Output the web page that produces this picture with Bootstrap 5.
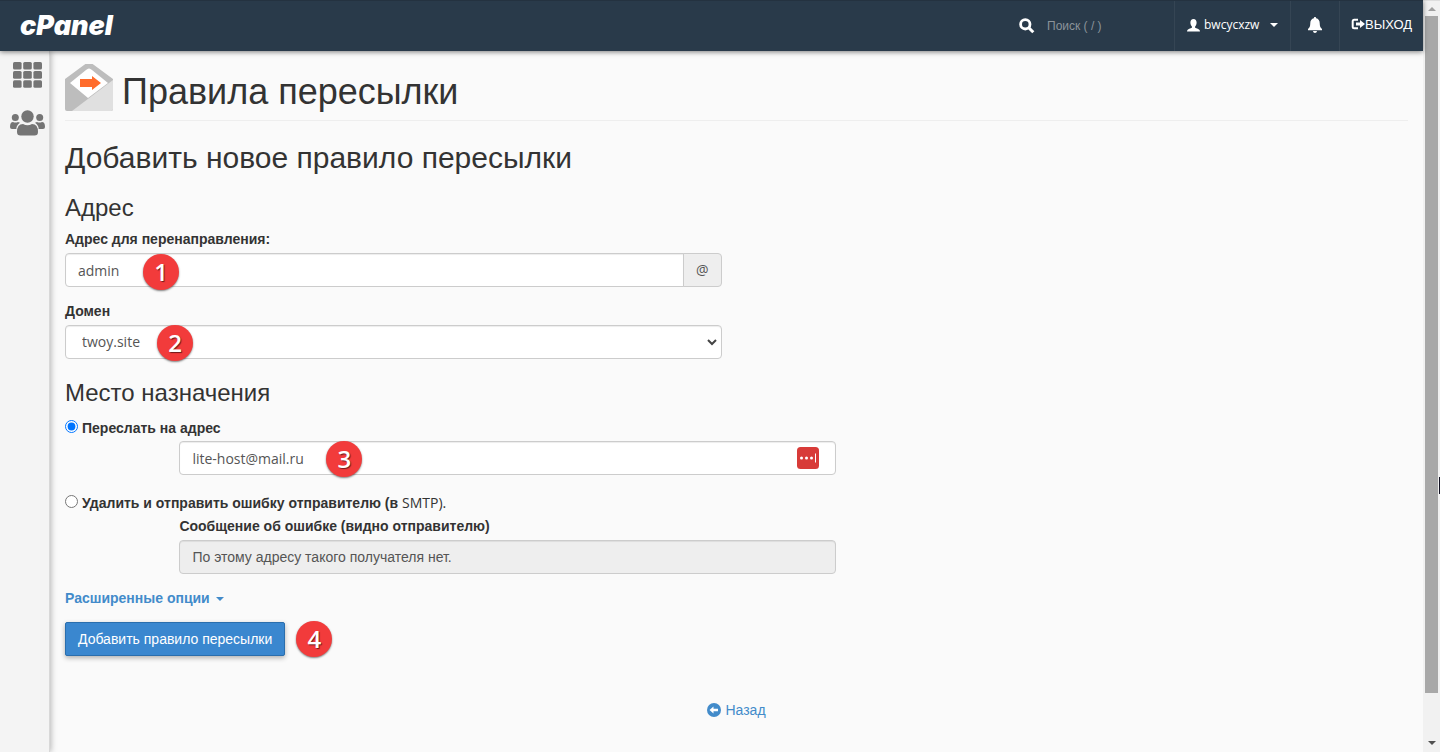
<!DOCTYPE html>
<html lang="ru">
<head>
<meta charset="utf-8">
<meta name="viewport" content="width=device-width, initial-scale=1">
<title>cPanel - Правила пересылки</title>
<link href="https://cdn.jsdelivr.net/npm/bootstrap@5.3.0/dist/css/bootstrap.min.css" rel="stylesheet">
<style>
  body { font: 14px/20px "Liberation Sans", Arial, sans-serif; color: #333; background: #fafafa; }
  .latin { font-family: "Open Sans", "Liberation Sans", sans-serif; }
  a { color: #428bca; text-decoration: none; }

  .topbar { height: 51px; background: #293a4a; border-top: 1px solid #243240; box-shadow: 0 1px 5px rgba(0,0,0,.5); z-index: 3; font-size: 12px; }
  .brand { color: #fff; font: italic 900 27px/50px Inter, "Open Sans", sans-serif; }
  .brand:hover { color: #fff; }
  .search-box { width: 111px; background: transparent; border: 0; color: #fff; font-size: 12px; outline: 0; }
  .search-box::placeholder { color: #8b939a; opacity: 1; }
  .top-item { border: 0; border-left: 1px solid #354554; background: transparent; color: #fff; font-size: 12px; padding-bottom: 3px; }
  .user-item { width: 116px; }
  .bell-item { width: 49px; padding-bottom: 5px; }
  .exit-item { width: 84px; font-size: 13px; }
  .exit-item:hover { color: #fff; }

  .sidebar { width: 50px; background: #f4f4f4; border-right: 1px solid #d8d8d8; box-shadow: 1px 0 6px rgba(0,0,0,.28); z-index: 2; padding: 11px 0 0 5px; gap: 22px; }

  main { padding: 12px 15px 32px; }
  .page-head { border-bottom: 1px solid #eee; padding-bottom: 8px; gap: 9px; }
  h1 { font-size: 36px; line-height: 40px; font-weight: 400; margin: 9px 0 0; }
  h2 { font-size: 30px; line-height: 33px; font-weight: 400; margin: 20px 0 0; }
  h3 { font-size: 24px; line-height: 26px; font-weight: 400; margin: 21px 0 8px; }
  .row { --bs-gutter-x: 30px; }
  .field-label { display: block; font-weight: 700; margin-bottom: 4px; }
  .form-control, .form-select, .input-group-text { height: 34px; font-size: 14px; line-height: 20px; padding: 6px 12px; border: 1px solid #ccc; border-radius: 4px; color: #555; }
  .form-control, .form-select { box-shadow: inset 0 1px 1px rgba(0,0,0,.075); }
  .form-control:disabled { background: #eee; }
  .form-select { padding-left: 16px; background-size: 10px 10px; background-position: right 4px center;
    background-image: url("data:image/svg+xml,%3csvg xmlns='http://www.w3.org/2000/svg' viewBox='0 0 10 10'%3e%3cpath fill='none' stroke='%23444' stroke-width='2' d='m1 3 4 4 4-4'/%3e%3c/svg%3e"); }
  .input-group-text { background: #eee; }
  .gap-field { margin-top: 14px; }
  .choice { min-height: 27px; gap: 4px; font-weight: 700; }
  .choice input { width: 13px; height: 13px; margin: 0 0 3px; }
  .step { width: 36px; height: 36px; border-radius: 50%; background: #f23b3b; color: #fff; font: 600 24px/36px "Open Sans", sans-serif; text-align: center; text-shadow: 1px 1px 1px rgba(0,0,0,.55); box-shadow: 0 1px 2px rgba(0,0,0,.5); z-index: 5; }
  .step-1 { left: 78px; top: 1px; }
  .step-2 { left: 92px; top: 0; }
  .step-3 { left: 147px; top: 0; }
  .vault { right: 17px; top: 6px; z-index: 5; line-height: 0; }
  .caret { display: inline-block; border: 4px solid transparent; border-top-color: currentColor; border-bottom: 0; vertical-align: middle; margin-left: 2px; }
  .submit-row { margin-top: 13px; gap: 11px; }
  .btn-add { height: 34px; padding: 6px 12px; font-size: 14px; line-height: 20px; color: #fff; background: #3a87cf; border: 1px solid #2a6ead; border-radius: 2px; box-shadow: 0 2px 5px rgba(0,0,0,.3); }
  .back { margin-top: 43px; }

  .scroll-rail { width: 17px; background: #f1f1f1; border-top: 1px solid #ddd; gap: 5px; }
  .scroll-thumb { width: 13px; background: #a8a8a8; margin-bottom: 43px; }
  .arrow-up { border: 4px solid transparent; border-bottom-color: #a0a0a0; border-top: 0; margin-top: 6px; }
  .arrow-down { border: 4px solid transparent; border-top-color: #505050; border-bottom: 0; margin-bottom: 7px; }
  .pointer { width: 1px; height: 17px; background: #112; right: 0; top: 476px; }
</style>
</head>
<body>
<div class="d-flex min-vh-100">
  <div class="d-flex flex-column flex-grow-1">
    <header class="topbar d-flex align-items-stretch position-relative">
      <a class="brand ms-3 ps-1 me-auto" href="#">cPanel</a>
      <form class="d-flex align-items-center" role="search">
        <label for="q" class="d-flex me-2 pe-1"><svg width="16" height="16" viewBox="0 0 16 16" fill="none" stroke="#fff"><circle cx="6.300" cy="6.300" r="4.700" stroke-width="2.800"/><path d="m10 10 4.300 4.300" stroke-width="3"/></svg></label>
        <input id="q" type="text" class="search-box p-0 me-3" placeholder="Поиск ( / )">
      </form>
      <button type="button" class="top-item user-item d-flex align-items-center px-2">
        <svg class="ms-1" width="13" height="13" viewBox="0 0 13 13" fill="#fff"><path d="M6.500 0C4.500 0 3.400 1.500 3.400 3.600c0 1.600.6 3 1.500 3.900v1.300C3.500 9.500.8 10.200.3 11.200L0 12.500h13l-.3-1.300c-.5-1-3.200-1.700-4.600-2.400V7.500c.9-.9 1.500-2.300 1.500-3.900C9.600 1.500 8.500 0 6.500 0z"/></svg>
        <span class="latin ms-1">bwcycxzw</span>
        <span class="caret ms-auto me-1"></span>
      </button>
      <button type="button" class="top-item bell-item px-0" aria-label="Уведомления">
        <svg width="16" height="16" viewBox="0 0 16 16" fill="#fff"><path d="M8 0c.7 0 1.100.5 1.100 1.200 2.300.5 3.600 2.400 3.600 4.800 0 3.600.9 4.900 2.300 6v1.300H1V12c1.400-1.100 2.300-2.400 2.300-6 0-2.400 1.300-4.300 3.600-4.800C6.900.5 7.300 0 8 0zM6 14h4c-.2 1.200-.9 1.900-2 1.900S6.200 15.200 6 14z"/></svg>
      </button>
      <a href="#" class="top-item exit-item d-flex align-items-center justify-content-center">
        <svg width="14" height="13" viewBox="0 0 14 13"><path d="M7 1.800H3.200q-1.500 0-1.500 1.500v5.400q0 1.500 1.500 1.500H7" fill="none" stroke="#fff" stroke-width="2"/><path d="M5 4.500h4V2l5 4-5 4V7.500H5z" fill="#fff"/></svg>
        <span>ВЫХОД</span>
      </a>
    </header>
    <div class="d-flex flex-grow-1">
      <nav class="sidebar d-flex flex-column align-items-center flex-shrink-0">
        <a href="#" aria-label="Все инструменты" class="d-flex"><svg width="29" height="26" viewBox="0 0 29 26" fill="#757575"><g id="r"><rect width="8.600" height="7.600" rx="1.500"/><rect x="10.200" width="8.600" height="7.600" rx="1.500"/><rect x="20.400" width="8.600" height="7.600" rx="1.500"/></g><use href="#r" y="9.100"/><use href="#r" y="18.200"/></svg></a>
        <a href="#" aria-label="Пользователи" class="d-flex"><svg width="35" height="26" viewBox="0 0 35 26" fill="#757575"><circle cx="17.500" cy="6.500" r="6.200"/><circle cx="5.300" cy="7.500" r="3.500"/><circle cx="29.700" cy="7.500" r="3.500"/><path d="M7 22q0-8 6-8 4.500 2.500 9 0 6 0 6 8 0 3.500-3.500 3.500h-14Q7 25.500 7 22zM3 12q2.500 1 5 0l2 .8Q6.500 15 6.300 19H2Q0 19 0 17q0-5 3-5zM32 12q-2.500 1-5 0l-2 .8q3.500 2.200 3.700 6.200H33q2 0 2-2 0-5-3-5z"/></svg></a>
      </nav>
      <main class="flex-grow-1">
        <div class="page-head d-flex align-items-center">
          <svg width="48" height="48" viewBox="0 0 48 48"><path d="M0 18v-3L19 1q5-4 10 0l19 14v30q0 2-2 2H2q-2 0-2-2z" fill="#bdbdbd"/><path d="M5 19 21 6q3-3 6 0l16 13-20 15z" fill="#fff"/><path d="M48 16v29q0 2-2 2H7z" fill="#e0e0e0"/><path d="M15 15h12v-3l9 7-9 7v-3H15z" fill="#ff6c2c"/></svg>
          <h1>Правила пересылки</h1>
        </div>
        <h2>Добавить новое правило пересылки</h2>
        <form>
          <h3>Адрес</h3>
          <div class="row">
            <div class="col-6">
              <label class="field-label" for="addr">Адрес для перенаправления:</label>
              <div class="position-relative">
                <div class="input-group">
                  <input id="addr" type="text" class="form-control latin" value="admin">
                  <span class="input-group-text latin">@</span>
                </div>
                <span class="step step-1 position-absolute">1</span>
              </div>
            </div>
          </div>
          <div class="row gap-field">
            <div class="col-6">
              <label class="field-label" for="domain">Домен</label>
              <div class="position-relative">
                <select id="domain" class="form-select latin"><option>twoy.site</option></select>
                <span class="step step-2 position-absolute">2</span>
              </div>
            </div>
          </div>
          <h3>Место назначения</h3>
          <div class="choice d-flex align-items-center">
            <input type="radio" name="dest" id="fwd" checked><label for="fwd">Переслать на адрес</label>
          </div>
          <div class="row">
            <div class="col-6 offset-1">
              <div class="position-relative">
                <input type="text" class="form-control latin" aria-label="Переслать на адрес" value="lite-host@mail.ru">
                <span class="step step-3 position-absolute">3</span>
                <span class="vault position-absolute"><svg width="22" height="22" viewBox="0 0 22 22"><rect width="22" height="22" rx="3.500" fill="#d83b38"/><g fill="#fff"><circle cx="4.500" cy="11" r="1.500"/><circle cx="9.500" cy="11" r="1.500"/><circle cx="14.500" cy="11" r="1.500"/><path d="M18 6.500h1v9h-1z"/></g></svg></span>
              </div>
            </div>
          </div>
          <div class="choice gap-field d-flex align-items-center">
            <input type="radio" name="dest" id="fail"><label for="fail">Удалить и отправить ошибку отправителю (в <span class="latin fw-normal">SMTP).</span></label>
          </div>
          <div class="row">
            <div class="col-6 offset-1">
              <label class="field-label" for="msg">Сообщение об ошибке (видно отправителю)</label>
              <input id="msg" type="text" class="form-control" value="По этому адресу такого получателя нет." disabled>
            </div>
          </div>
          <div class="gap-field"><a href="#" class="fw-bold">Расширенные опции <span class="caret"></span></a></div>
          <div class="submit-row d-flex align-items-center">
            <button type="button" class="btn-add">Добавить правило пересылки</button>
            <span class="step">4</span>
          </div>
        </form>
        <div class="back d-flex justify-content-center">
          <a href="#" class="d-flex align-items-center gap-1"><svg width="14" height="14" viewBox="0 0 14 14"><circle cx="7" cy="7" r="7" fill="#428bca"/><path d="m2.500 7 4-3.500v2.300h4.500v2.400H6.500v2.300z" fill="#fff"/></svg>Назад</a>
        </div>
      </main>
    </div>
  </div>
  <div class="scroll-rail d-flex flex-column align-items-center flex-shrink-0 position-relative" aria-hidden="true">
    <div class="arrow-up"></div>
    <div class="scroll-thumb flex-grow-1"></div>
    <div class="arrow-down"></div>
    <div class="pointer position-absolute"></div>
  </div>
</div>
<script src="https://cdn.jsdelivr.net/npm/bootstrap@5.3.0/dist/js/bootstrap.bundle.min.js"></script>
</body>
</html>
